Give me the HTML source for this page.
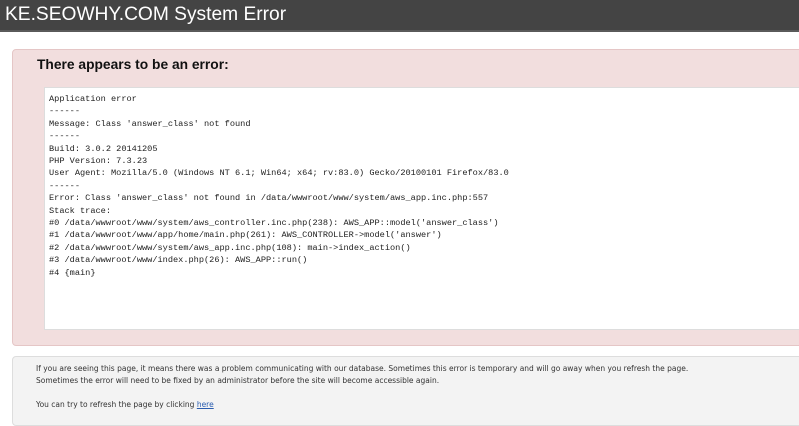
<!DOCTYPE html>
<html><head><meta charset="utf-8"><style>
body{margin:0;background:#fff;width:799px;height:413px;overflow:hidden;position:relative;font-family:"DejaVu Sans","Liberation Sans",sans-serif}
.hd{position:absolute;left:0;top:0;width:799px;height:32px;background:#444;border-bottom:2px solid #5a5a5a;color:#fff;font-family:"Liberation Sans",sans-serif;font-size:19.2px;line-height:29px;padding-left:5px;box-sizing:border-box}
.err{position:absolute;left:12px;top:49px;width:820px;height:297px;background:#f2dede;border:1px solid #e5c6c6;border-radius:4px;box-sizing:border-box}
.err h2{position:absolute;left:24px;top:7px;margin:0;font-size:13.8px;font-weight:bold;color:#111;font-family:"Liberation Sans",sans-serif}
.pre{position:absolute;left:31px;top:37px;width:800px;height:243px;background:#fff;border:1px solid #ddd;box-sizing:border-box;font-family:"Liberation Mono",monospace;font-size:8.62px;line-height:12.4px;color:#222;padding:5px 4px;white-space:pre}
.ft{position:absolute;left:12px;top:356px;width:820px;height:70px;background:#f3f3f3;border:1px solid #ddd;border-radius:4px;box-sizing:border-box;font-size:7.5px;color:#333;line-height:12px;padding:6px 0 0 23px}
a{color:#2a5db0}
</style></head><body>
<div class="hd">KE.SEOWHY.COM System Error</div>
<div class="err"><h2>There appears to be an error:</h2>
<div class="pre">Application error
------
Message: Class 'answer_class' not found
------
Build: 3.0.2 20141205
PHP Version: 7.3.23
User Agent: Mozilla/5.0 (Windows NT 6.1; Win64; x64; rv:83.0) Gecko/20100101 Firefox/83.0
------
Error: Class 'answer_class' not found in /data/wwwroot/www/system/aws_app.inc.php:557
Stack trace:
#0 /data/wwwroot/www/system/aws_controller.inc.php(238): AWS_APP::model('answer_class')
#1 /data/wwwroot/www/app/home/main.php(261): AWS_CONTROLLER->model('answer')
#2 /data/wwwroot/www/system/aws_app.inc.php(108): main->index_action()
#3 /data/wwwroot/www/index.php(26): AWS_APP::run()
#4 {main}</div></div>
<div class="ft">If you are seeing this page, it means there was a problem communicating with our database. Sometimes this error is temporary and will go away when you refresh the page.<br>Sometimes the error will need to be fixed by an administrator before the site will become accessible again.<br><br>You can try to refresh the page by clicking <a href="#">here</a></div>
</body></html>
